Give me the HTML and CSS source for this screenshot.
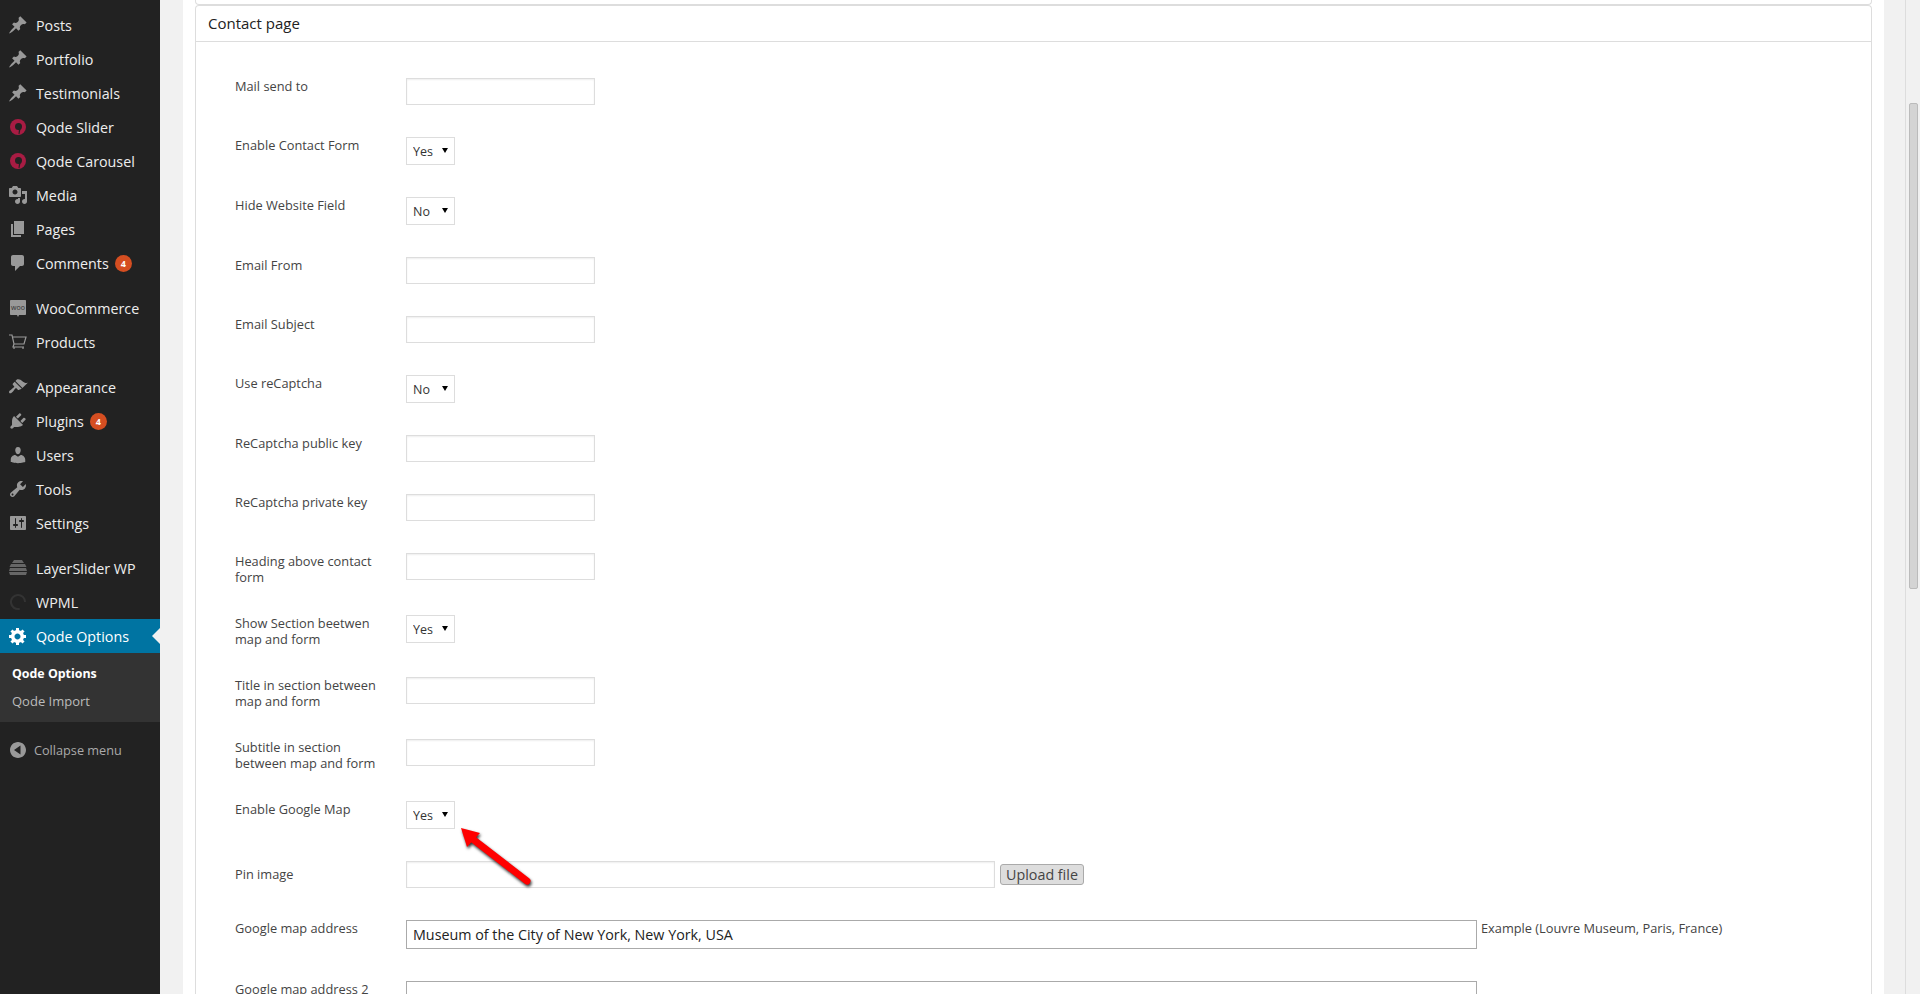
FILE: index.html
```html
<!DOCTYPE html>
<html lang="en">
<head>
  <meta charset="utf-8">
  <title>Qode Options</title>
  <link rel="stylesheet" href="styles.css">
</head>
<body>
  <div class="page">
    <!-- admin menu -->
    <nav class="sidebar">
      <a class="menu-item"><svg class="icon" viewBox="0 0 20 20"><path d="M10.44 3.02l1.82-1.82 6.36 6.35-1.83 1.82c-1.05-.68-2.48-.57-3.41.36l-.75.75c-.92.93-1.04 2.35-.35 3.41l-1.83 1.82-2.41-2.41-2.8 2.79c-.42.42-3.38 2.71-3.8 2.29s1.86-3.39 2.28-3.81l2.79-2.79L4.1 9.36l1.83-1.82c1.05.69 2.48.57 3.4-.36l.75-.75c.93-.92 1.05-2.35.36-3.41z"/></svg>Posts</a>
      <a class="menu-item"><svg class="icon" viewBox="0 0 20 20"><path d="M10.44 3.02l1.82-1.82 6.36 6.35-1.83 1.82c-1.05-.68-2.48-.57-3.41.36l-.75.75c-.92.93-1.04 2.35-.35 3.41l-1.83 1.82-2.41-2.41-2.8 2.79c-.42.42-3.38 2.71-3.8 2.29s1.86-3.39 2.28-3.81l2.79-2.79L4.1 9.36l1.83-1.82c1.05.69 2.48.57 3.4-.36l.75-.75c.93-.92 1.05-2.35.36-3.41z"/></svg>Portfolio</a>
      <a class="menu-item"><svg class="icon" viewBox="0 0 20 20"><path d="M10.44 3.02l1.82-1.82 6.36 6.35-1.83 1.82c-1.05-.68-2.48-.57-3.41.36l-.75.75c-.92.93-1.04 2.35-.35 3.41l-1.83 1.82-2.41-2.41-2.8 2.79c-.42.42-3.38 2.71-3.8 2.29s1.86-3.39 2.28-3.81l2.79-2.79L4.1 9.36l1.83-1.82c1.05.69 2.48.57 3.4-.36l.75-.75c.93-.92 1.05-2.35.36-3.41z"/></svg>Testimonials</a>
      <a class="menu-item"><svg class="icon" viewBox="0 0 20 20"><circle class="qode-ring" cx="10" cy="10" r="8"/><circle class="qode-hole" cx="10.5" cy="9.5" r="3.5"/><path class="qode-hole" d="M11 12l1.5 0-1 5-1 0z"/></svg>Qode Slider</a>
      <a class="menu-item"><svg class="icon" viewBox="0 0 20 20"><circle class="qode-ring" cx="10" cy="10" r="8"/><circle class="qode-hole" cx="10.5" cy="9.5" r="3.5"/><path class="qode-hole" d="M11 12l1.5 0-1 5-1 0z"/></svg>Qode Carousel</a>
      <a class="menu-item"><svg class="icon" viewBox="0 0 20 20"><path d="M13 11V4c0-.55-.45-1-1-1h-1.67L9 1H5L3.67 3H2c-.55 0-1 .45-1 1v7c0 .55.45 1 1 1h10c.55 0 1-.45 1-1zM7 4.5c1.38 0 2.5 1.12 2.5 2.5S8.38 9.5 7 9.5 4.5 8.38 4.5 7 5.62 4.5 7 4.5zM14 6h5v10.5c0 1.38-1.12 2.5-2.5 2.5S14 17.88 14 16.5s1.12-2.5 2.5-2.5c.17 0 .34.02.5.05V9h-3V6zm-4 8.05V13h2v3.5c0 1.38-1.12 2.5-2.5 2.5S7 17.88 7 16.5 8.12 14 9.5 14c.17 0 .34.02.5.05z"/></svg>Media</a>
      <a class="menu-item"><svg class="icon" viewBox="0 0 20 20"><path d="M6 15V2h10v13H6zm-1 1h8v2H3V5h2v11z"/></svg>Pages</a>
      <a class="menu-item"><svg class="icon" viewBox="0 0 20 20"><path d="M5 2h9c1.1 0 2 .9 2 2v7c0 1.1-.9 2-2 2h-2l-5 5v-5H5c-1.1 0-2-.9-2-2V4c0-1.1.9-2 2-2z"/></svg>Comments<span class="badge">4</span></a>
      <div class="menu-sep"></div>
      <a class="menu-item"><svg class="icon" viewBox="0 0 20 20"><path d="M3 2h14c.6 0 1 .4 1 1v13c0 .6-.4 1-1 1h-6l-1 2-1-2H3c-.6 0-1-.4-1-1V3c0-.6.4-1 1-1z"/><text class="woo-text" x="10" y="12" text-anchor="middle">woo</text></svg>WooCommerce</a>
      <a class="menu-item"><svg class="icon icon-line" viewBox="0 0 20 20"><path d="M1 3h3l2 9h10l2-7H5M6 12l-1 3h11"/><path d="M6 15v2M15 15v2"/></svg>Products</a>
      <div class="menu-sep"></div>
      <a class="menu-item"><svg class="icon" viewBox="0 0 20 20"><path d="M14.48 11.06L7.41 3.99l1.5-1.5c.5-.56 2.3-.47 3.51.32 1.21.8 1.43 1.28 2.91 2.1 1.18.64 2.45 1.26 4.45.85zm-.71.71L6.7 4.7 4.93 6.47c-.39.39-.39 1.02 0 1.41l1.06 1.06c.39.39.39 1.03 0 1.42-.6.6-1.43 1.11-2.21 1.69-.35.26-.7.53-1.01.84C1.43 13.23.4 14.96 1.4 15.96c.1.1.21.18.33.25 1.01.52 2.15-.49 3.05-1.39.31-.31.58-.66.84-1.01.58-.78 1.09-1.61 1.69-2.21.39-.39 1.03-.39 1.42 0l1.06 1.06c.39.39 1.02.39 1.41 0z"/></svg>Appearance</a>
      <a class="menu-item"><svg class="icon" viewBox="0 0 20 20"><path d="M13.11 4.36L9.87 7.6 8 5.73l3.24-3.24c.35-.34 1.05-.2 1.56.32.52.51.66 1.21.31 1.55zm-8 1.77l.91-1.12 9.01 9.01-1.19.84c-.71.71-2.63 1.16-3.82 1.16H6.14L4.9 17.26c-.59.59-1.54.59-2.12 0-.59-.58-.59-1.53 0-2.12l1.24-1.24v-3.88c0-1.13.4-3.19 1.09-3.89zm7.26 3.97l3.24-3.24c.34-.35 1.04-.21 1.55.31.52.51.66 1.21.31 1.55l-3.24 3.25z"/></svg>Plugins<span class="badge">4</span></a>
      <a class="menu-item"><svg class="icon" viewBox="0 0 20 20"><path d="M10 9.25c-2.27 0-2.73-3.44-2.73-3.44C7 4.02 7.82 2 9.97 2c2.16 0 2.98 2.02 2.71 3.81 0 0-.41 3.44-2.68 3.44zm0 2.57L12.72 10c2.39 0 4.52 2.33 4.52 4.53v2.49s-3.65 1.13-7.24 1.13c-3.65 0-7.24-1.13-7.24-1.13v-2.49c0-2.25 1.94-4.48 4.47-4.48z"/></svg>Users</a>
      <a class="menu-item"><svg class="icon" viewBox="0 0 20 20"><path fill-rule="evenodd" d="M16.68 9.77c-1.34 1.34-3.3 1.67-4.95.99l-5.41 6.52c-.99.99-2.59.99-3.58 0s-.99-2.59 0-3.57l6.52-5.42c-.68-1.65-.35-3.61.99-4.95 1.28-1.28 3.12-1.62 4.72-1.06l-2.89 2.89 2.82 2.82 2.86-2.87c.53 1.58.18 3.39-1.08 4.65zM3.81 16.21c.4.39 1.04.39 1.43 0 .4-.4.4-1.04 0-1.43-.39-.4-1.03-.4-1.43 0-.39.39-.39 1.03 0 1.43z"/></svg>Tools</a>
      <a class="menu-item"><svg class="icon" viewBox="0 0 20 20"><path fill-rule="evenodd" d="M18 16V4c0-.55-.45-1-1-1H3c-.55 0-1 .45-1 1v12c0 .55.45 1 1 1h14c.55 0 1-.45 1-1zM8 11h1c.55 0 1 .45 1 1s-.45 1-1 1H8v1.5c0 .28-.22.5-.5.5s-.5-.22-.5-.5V13H6c-.55 0-1-.45-1-1s.45-1 1-1h1V5.5c0-.28.22-.5.5-.5s.5.22.5.5V11zm5-2h-1c-.55 0-1-.45-1-1s.45-1 1-1h1V5.5c0-.28.22-.5.5-.5s.5.22.5.5V7h1c.55 0 1 .45 1 1s-.45 1-1 1h-1v5.5c0 .28-.22.5-.5.5s-.5-.22-.5-.5V9z"/></svg>Settings</a>
      <div class="menu-sep"></div>
      <a class="menu-item"><svg class="icon icon-dim" viewBox="0 0 20 20"><path d="M6 2h8l2 3H4zM3 6h14l1.500 3h-17zM2 10h16l1 3H1zM1 14h18l-1 3H2z"/></svg>LayerSlider WP</a>
      <a class="menu-item"><svg class="icon icon-wpml" viewBox="0 0 20 20"><path d="M10 2a8 8 0 1 0 2 15.700l-.5-2A6 6 0 1 1 16 10h2a8 8 0 0 0-8-8z"/></svg>WPML</a>
      <a class="menu-item active"><svg class="icon" viewBox="0 0 20 20"><path fill-rule="evenodd" d="M18 12h-2.180c-.17.7-.44 1.350-.81 1.930l1.540 1.540-2.100 2.100-1.540-1.540c-.58.36-1.230.63-1.910.79V19H8v-2.180c-.68-.16-1.330-.43-1.910-.79l-1.540 1.540-2.120-2.120 1.540-1.540c-.36-.58-.63-1.230-.79-1.910H1V9.030h2.170c.16-.7.44-1.350.8-1.940L2.430 5.550l2.100-2.100 1.540 1.540c.58-.37 1.240-.64 1.930-.81V2h3v2.180c.68.16 1.330.43 1.910.79l1.540-1.540 2.120 2.120-1.540 1.540c.36.59.64 1.240.8 1.940H18V12zm-8.500 1.500c1.660 0 3-1.340 3-3s-1.340-3-3-3-3 1.340-3 3 1.340 3 3 3z"/></svg>Qode Options</a>
      <div class="submenu">
        <a class="sub-item current">Qode Options</a>
        <a class="sub-item">Qode Import</a>
      </div>
      <a class="collapse"><svg class="icon" viewBox="0 0 20 20"><path fill-rule="evenodd" d="M10 2c4.420 0 8 3.580 8 8s-3.580 8-8 8-8-3.580-8-8 3.580-8 8-8zM12.500 5.500L6 10l6.500 4.500z"/></svg>Collapse menu</a>
    </nav>

    <main class="content">
      <div class="panel">
        <div class="prev-card"></div>
        <section class="card">
          <h3 class="card-title">Contact page</h3>
          <div class="card-body">
            <div class="row">
              <label class="row-label">Mail send to</label>
              <div class="row-control"><input class="field" type="text"></div>
            </div>
            <div class="row">
              <label class="row-label">Enable Contact Form</label>
              <div class="row-control"><span class="select-wrap"><select class="select"><option>Yes</option></select></span></div>
            </div>
            <div class="row">
              <label class="row-label">Hide Website Field</label>
              <div class="row-control"><span class="select-wrap"><select class="select"><option>No</option></select></span></div>
            </div>
            <div class="row">
              <label class="row-label">Email From</label>
              <div class="row-control"><input class="field" type="text"></div>
            </div>
            <div class="row">
              <label class="row-label">Email Subject</label>
              <div class="row-control"><input class="field" type="text"></div>
            </div>
            <div class="row">
              <label class="row-label">Use reCaptcha</label>
              <div class="row-control"><span class="select-wrap"><select class="select"><option>No</option></select></span></div>
            </div>
            <div class="row">
              <label class="row-label">ReCaptcha public key</label>
              <div class="row-control"><input class="field" type="text"></div>
            </div>
            <div class="row">
              <label class="row-label">ReCaptcha private key</label>
              <div class="row-control"><input class="field" type="text"></div>
            </div>
            <div class="row">
              <label class="row-label">Heading above contact form</label>
              <div class="row-control"><input class="field" type="text"></div>
            </div>
            <div class="row">
              <label class="row-label">Show Section beetwen map and form</label>
              <div class="row-control"><span class="select-wrap"><select class="select"><option>Yes</option></select></span></div>
            </div>
            <div class="row">
              <label class="row-label">Title in section between map and form</label>
              <div class="row-control"><input class="field" type="text"></div>
            </div>
            <div class="row">
              <label class="row-label">Subtitle in section between map and form</label>
              <div class="row-control"><input class="field" type="text"></div>
            </div>
            <div class="row">
              <label class="row-label">Enable Google Map</label>
              <div class="row-control"><span class="select-wrap"><select class="select"><option>Yes</option></select></span></div>
            </div>
            <div class="row">
              <label class="row-label row-label-mid">Pin image</label>
              <div class="row-control upload-line">
                <input class="field field-pin" type="text">
                <button class="upload-btn" type="button">Upload file</button>
              </div>
            </div>
            <div class="row">
              <label class="row-label">Google map address</label>
              <div class="row-control address-line">
                <input class="field-address" type="text" value="Museum of the City of New York, New York, USA">
                <span class="hint">Example (Louvre Museum, Paris, France)</span>
              </div>
            </div>
            <div class="row">
              <label class="row-label">Google map address 2</label>
              <div class="row-control address-line">
                <input class="field-address" type="text">
              </div>
            </div>
          </div>
        </section>
      </div>
    </main>

    <div class="scrollbar"><div class="scroll-thumb"></div></div>

    <!-- red annotation arrow over the form -->
    <svg class="note-arrow" viewBox="0 0 85 70" width="85" height="70">
      <path class="arrow-head" d="M6 6L25 11 12 25z"/>
      <path class="arrow-shaft" d="M15 15L72 59"/>
    </svg>
  </div>
</body>
</html>
```

FILE: styles.css
```css
* {
  margin: 0; padding: 0; box-sizing: border-box;
}
html, body {
  height: 100%;
  overflow: hidden;
}
body {
  font-family: "Open Sans", sans-serif;
  font-size: 12.8px;
  color: #444;
  background-color: #f1f1f1;
}
.page {
  position: relative;
  display: flex;
  height: 994px;
  overflow: hidden;
}

/* admin menu */
.sidebar {
  flex: 0 0 160px;
  padding-top: 8px;
  background-color: #222;
}
.menu-item {
  position: relative;
  display: flex;
  align-items: center;
  height: 34px;
  padding-left: 8px;
  color: #eee;
  font-size: 14.3px;
}
.menu-sep {
  height: 11px;
}
.icon {
  flex: 0 0 20px;
  width: 20px;
  height: 20px;
  margin-right: 8px;
  fill: #999;
}
.icon-line {
  fill: none;
  stroke: #999;
  stroke-width: 1.2;
}
.icon-dim { fill: #666; }
.icon-wpml { fill: #333; }
.qode-ring { fill: #a81c43; }
.qode-hole { fill: #222; }
.woo-text {
  fill: #333;
  font-size: 7px;
  font-family: "Open Sans", sans-serif;
}
.badge {
  display: inline-block;
  width: 17px;
  height: 17px;
  margin-left: 6px;
  border-radius: 50%;
  background-color: #d54e21;
  color: #fff;
  font-size: 9px;
  font-weight: 700;
  line-height: 17px;
  text-align: center;
}
.menu-item.active {
  background-color: #0074a2;
  color: #fff;
}
.menu-item.active .icon { fill: #fff; }
/* little arrow pointing at the content */
.menu-item.active::after {
  content: "";
  position: absolute;
  right: 0;
  top: 9px;
  border: 8px solid transparent;
  border-left: 0;
  border-right-color: #f1f1f1;
}
.submenu {
  height: 69px;
  padding-top: 7px;
  background-color: #333;
}
.sub-item {
  display: block;
  height: 27px;
  padding-left: 12px;
  color: #bbb;
  font-size: 13px;
  line-height: 28px;
}
.sub-item.current {
  color: #fff;
  font-size: 12.4px;
  font-weight: 700;
}
.collapse {
  display: flex;
  align-items: center;
  height: 34px;
  margin-top: 11px;
  padding-left: 8px;
  color: #aaa;
  font-size: 12.7px;
}
.collapse .icon {
  margin-right: 6px;
}

/* content */
.content {
  flex: 1;
  min-width: 0;
  padding: 0 21px 0 23px;
  background-color: #f1f1f1;
}
.panel {
  height: 100%;
  padding: 0 12px 0 12px;
  background-color: #fff;
}
.prev-card {
  height: 5px;
  border: 1px solid #ddd;
  border-top: 0;
  border-radius: 0 0 4px 4px;
}
.card {
  border: 1px solid #ddd;
  border-bottom: 0;
  border-radius: 4px 4px 0 0;
  min-height: 989px;
}
.card-title {
  height: 36px;
  padding-left: 12px;
  border-bottom: 1px solid #ddd;
  color: #222;
  font-size: 15px;
  font-weight: 400;
  line-height: 35px;
}
.card-body {
  padding: 36px 0 0 39px;
}
.row {
  display: flex;
  align-items: flex-start;
}
.row-label {
  flex: 0 0 171px;
  padding: 0 24px 30px 0;
  line-height: 16px;
}
.row-label-mid {
  padding-top: 5px;
}
.row-control {
  padding-bottom: 32px;
}
.field {
  display: block;
  width: 189px;
  height: 27px;
  border: 1px solid #ddd;
  box-shadow: inset 0 1px 2px rgba(0, 0, 0, 0.07);
  background-color: #fff;
  outline: 0;
}
.field-pin {
  width: 589px;
}
.select-wrap {
  position: relative;
  display: block;
  width: 49px;
  height: 28px;
}
.select {
  display: block;
  width: 49px;
  height: 28px;
  padding-left: 6px;
  border: 1px solid #ddd;
  border-radius: 0;
  background-color: #fff;
  color: #333;
  font: 12.5px "Open Sans", sans-serif;
  appearance: none;
  -webkit-appearance: none;
  outline: 0;
}
.select-wrap::after {
  content: "";
  position: absolute;
  left: 36px;
  top: 11px;
  border: 3px solid transparent;
  border-top: 5px solid #000;
  border-bottom: 0;
}
.upload-line {
  display: flex;
  align-items: center;
}
.upload-btn {
  height: 21px;
  width: 84px;
  margin-left: 5px;
  border: 1px solid #aaa;
  border-radius: 3px;
  background-color: #ddd;
  color: #444;
  font: 14.3px/19px "Open Sans", sans-serif;
}
.address-line {
  display: flex;
  align-items: flex-start;
}
.field-address {
  display: block;
  width: 1071px;
  height: 29px;
  padding-left: 6px;
  border: 1px solid #aaa;
  background-color: #fff;
  color: #222;
  font: 14.3px "Open Sans", sans-serif;
  outline: 0;
}
.hint {
  margin-left: 4px;
  line-height: 16px;
}

/* page scrollbar */
.scrollbar {
  flex: 0 0 15px;
  padding: 103px 2px 0 3px;
  border-left: 1px solid #ddd;
  background-color: #f1f1f1;
}
.scroll-thumb {
  height: 486px;
  border: 1px solid #bbb;
  border-radius: 2px;
  background-color: #d4d4d4;
}

/* annotation */
.note-arrow {
  position: absolute;
  left: 455px;
  top: 822px;
  overflow: visible;
  filter: drop-shadow(1px 2px 1.5px rgba(0, 0, 0, 0.8));
}
.arrow-head {
  fill: #f00;
}
.arrow-shaft {
  fill: none;
  stroke: #f00;
  stroke-width: 7;
  stroke-linecap: round;
}
```
